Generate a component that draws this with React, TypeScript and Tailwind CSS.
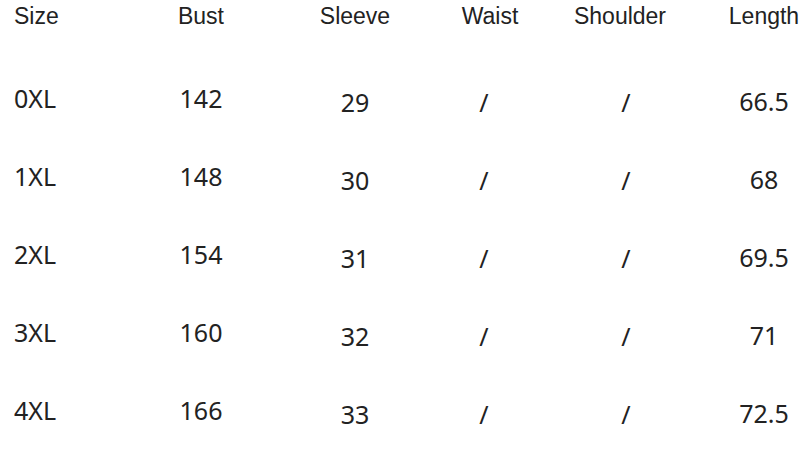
const headers = ["Size", "Bust", "Sleeve", "Waist", "Shoulder", "Length"];

const rows = [
  ["0XL", "142", "29", "/", "/", "66.5"],
  ["1XL", "148", "30", "/", "/", "68"],
  ["2XL", "154", "31", "/", "/", "69.5"],
  ["3XL", "160", "32", "/", "/", "71"],
  ["4XL", "166", "33", "/", "/", "72.5"],
];

const cols = "grid grid-cols-[140px_122px_186px_84px_176px_112px]";

export default function App() {
  return (
    <div className="h-[456px] w-[804px] overflow-hidden bg-white text-[#222]">
      <div
        className={`${cols} h-[33px] text-[23px] leading-[33px]`}
        style={{ fontFamily: '"Liberation Sans", Arial, sans-serif' }}
      >
        {headers.map((h, i) => (
          <div key={h} className={i === 0 ? "pl-[14px]" : "text-center"}>
            {h}
          </div>
        ))}
      </div>

      <div className="mt-[26px]" style={{ fontFamily: '"Noto Sans", "Open Sans", sans-serif' }}>
        {rows.map((r) => (
          <div key={r[0]} className={`${cols} h-[78px] text-[25px] leading-[78px]`}>
            <div className="pl-[14px]">{r[0]}</div>
            <div className="text-center">{r[1]}</div>
            <div className="pt-[4px] text-center">{r[2]}</div>
            <div className="pr-[12px] pt-[4px] text-center">{r[3]}</div>
            <div className="pl-[12px] pt-[4px] text-center">{r[4]}</div>
            <div className="pt-[3px] text-center">{r[5]}</div>
          </div>
        ))}
      </div>
    </div>
  );
}
